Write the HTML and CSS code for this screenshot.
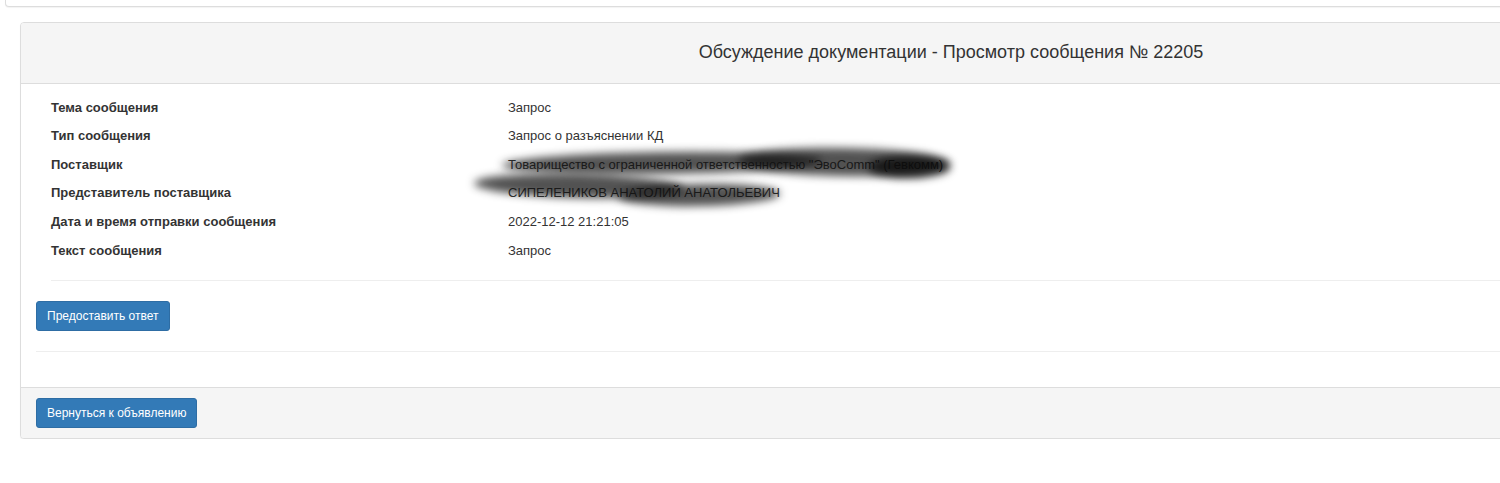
FILE: index.html
```html
<!DOCTYPE html>
<html lang="ru">
<head>
<meta charset="utf-8">
<title>Просмотр сообщения</title>
<link rel="stylesheet" href="styles.css">
</head>
<body>
<div class="page">
  <div class="page-inner">
    <div class="prev-panel"></div>
    <div class="content">
      <div class="panel">
        <div class="panel-heading">
          <h4 class="panel-title">Обсуждение документации - Просмотр сообщения № 22205</h4>
        </div>
        <div class="panel-body">
          <div class="details">
            <div class="info-table">
              <div class="info-row"><div class="info-label">Тема сообщения</div><div class="info-value">Запрос</div></div>
              <div class="info-row"><div class="info-label">Тип сообщения</div><div class="info-value">Запрос о разъяснении КД</div></div>
              <div class="info-row"><div class="info-label">Поставщик</div><div class="info-value">Товарищество с ограниченной ответственностью "ЭвоComm" (Гевкомм)<span class="redact redact-a1"></span><span class="redact redact-a2"></span><span class="redact redact-a3"></span></div></div>
              <div class="info-row"><div class="info-label">Представитель поставщика</div><div class="info-value">СИПЕЛЕНИКОВ АНАТОЛИЙ АНАТОЛЬЕВИЧ<span class="redact redact-b1"></span><span class="redact redact-b2"></span></div></div>
              <div class="info-row"><div class="info-label">Дата и время отправки сообщения</div><div class="info-value">2022-12-12 21:21:05</div></div>
              <div class="info-row"><div class="info-label">Текст сообщения</div><div class="info-value">Запрос</div></div>
            </div>
            <hr class="sep sep-first">
          </div>
          <div class="actions"><button class="btn" type="button">Предоставить ответ</button></div>
          <hr class="sep">
        </div>
        <div class="panel-footer">
          <button class="btn" type="button">Вернуться к объявлению</button>
        </div>
      </div>
    </div>
  </div>
</div>
</body>
</html>
```

FILE: styles.css
```css
html, body {
  margin: 0;
  padding: 0;
  background: #fff;
  overflow: hidden;
}

body {
  font-family: "Liberation Sans", Arial, sans-serif;
  font-size: 14px;
  line-height: 1.42857143;
  color: #333;
}

.page {
  width: 100%;
  overflow: hidden;
}

.page-inner {
  padding-left: 5px;
  width: 1900px;
}

.prev-panel {
  height: 6px;
  border: 1px solid #ddd;
  border-top: none;
  border-radius: 0 0 4px 4px;
  box-shadow: 0 1px 1px rgba(0, 0, 0, 0.05);
  background: #fff;
}

.content {
  padding: 15px 0 0 15px;
}

.panel {
  width: 1860px;
  background: #fff;
  border: 1px solid #ddd;
  border-radius: 4px;
  box-shadow: 0 1px 1px rgba(0, 0, 0, 0.05);
}

.panel-heading {
  padding: 10px 15px;
  background: #f5f5f5;
  border-bottom: 1px solid #ddd;
  border-radius: 3px 3px 0 0;
  text-align: center;
}

.panel-title {
  margin: 10px 0;
  font-size: 18px;
  font-weight: 500;
  line-height: 1.1;
  color: #333;
}

.panel-body {
  padding: 10px 15px 15px;
}

.details {
  padding: 0 15px;
}

.info-row {
  display: grid;
  grid-template-columns: 457px 1fr;
  padding: 5px 0;
  font-size: 13px;
  line-height: 1.42857143;
}

.info-label {
  font-weight: bold;
}

.info-value {
  position: relative;
}

.redact {
  position: absolute;
  display: block;
  background: rgba(15, 15, 15, 0.72);
  border-radius: 50%;
  filter: blur(4px);
  pointer-events: none;
}

.redact-a1 {
  left: -6px;
  top: -4px;
  width: 320px;
  height: 22px;
  transform: rotate(-0.8deg);
}

.redact-a2 {
  left: 230px;
  top: -8px;
  width: 212px;
  height: 28px;
  transform: rotate(1deg);
}

.redact-a3 {
  left: 360px;
  top: 0;
  width: 82px;
  height: 22px;
  background: rgba(10, 10, 10, 0.8);
}

.redact-b1 {
  left: -34px;
  top: -10px;
  width: 210px;
  height: 24px;
  transform: rotate(1.5deg);
}

.redact-b2 {
  left: 110px;
  top: 0;
  width: 162px;
  height: 22px;
  transform: rotate(-1deg);
}

.sep {
  height: 0;
  border: 0;
  border-top: 1px solid #eee;
  margin: 20px 0;
}

.sep-first {
  margin-top: 15px;
}

.actions {
  display: flex;
}

.btn {
  display: inline-block;
  padding: 5px 10px;
  font-family: inherit;
  font-size: 12px;
  line-height: 1.5;
  color: #fff;
  background: #337ab7;
  border: 1px solid #2e6da4;
  border-radius: 3px;
  cursor: pointer;
}

.panel-footer {
  display: flex;
  padding: 10px 15px;
  background: #f5f5f5;
  border-top: 1px solid #ddd;
  border-radius: 0 0 3px 3px;
}
```
